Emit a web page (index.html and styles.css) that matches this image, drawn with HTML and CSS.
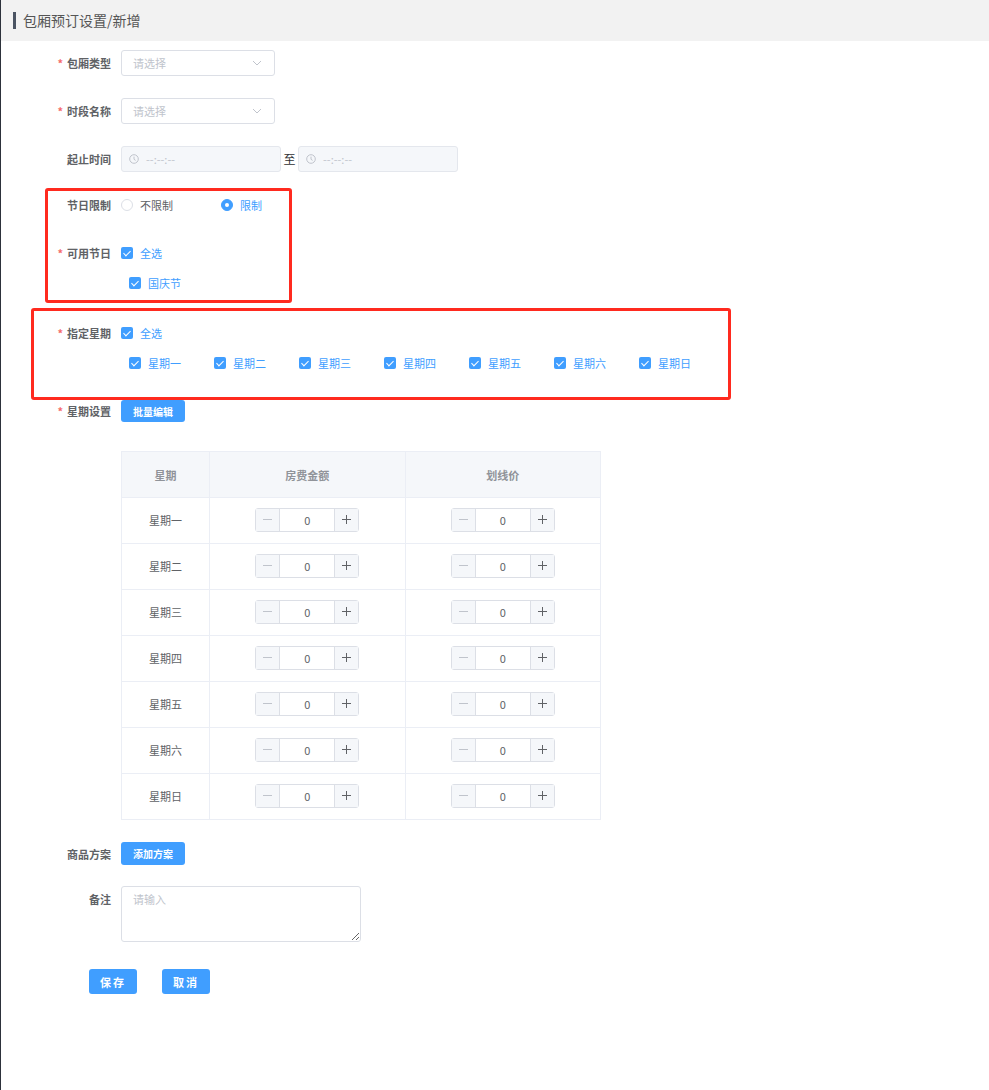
FILE: index.html
```html
<!DOCTYPE html>
<html lang="zh-CN">
<head>
    <meta charset="UTF-8">
    <meta name="viewport" content="width=device-width, initial-scale=1.0">
    <title>包厢预订设置/新增</title>
    <link rel="stylesheet" href="styles.css">
</head>
<body>
    <div class="page-header">
        <span class="page-title">包厢预订设置/新增</span>
    </div>

    <div class="form">
        <div class="form-item">
            <label class="form-label required">包厢类型</label>
            <div class="select">
                <span class="placeholder">请选择</span>
                <svg class="arrow" width="10" height="6" viewBox="0 0 10 6"><path d="M1 1l4 4 4-4" fill="none" stroke="#c0c4cc" stroke-width="1"/></svg>
            </div>
        </div>

        <div class="form-item">
            <label class="form-label required">时段名称</label>
            <div class="select">
                <span class="placeholder">请选择</span>
                <svg class="arrow" width="10" height="6" viewBox="0 0 10 6"><path d="M1 1l4 4 4-4" fill="none" stroke="#c0c4cc" stroke-width="1"/></svg>
            </div>
        </div>

        <div class="form-item form-item--time">
            <label class="form-label">起止时间</label>
            <div class="time-picker">
                <svg width="10" height="10" viewBox="0 0 10 10"><circle cx="5" cy="5" r="4.3" fill="none" stroke="#c0c4cc" stroke-width="1"/><path d="M5 2.6V5.3L6.6 6.4" fill="none" stroke="#c0c4cc" stroke-width="1"/></svg>
                <span class="placeholder">--:--:--</span>
            </div>
            <span class="range-sep">至</span>
            <div class="time-picker">
                <svg width="10" height="10" viewBox="0 0 10 10"><circle cx="5" cy="5" r="4.3" fill="none" stroke="#c0c4cc" stroke-width="1"/><path d="M5 2.6V5.3L6.6 6.4" fill="none" stroke="#c0c4cc" stroke-width="1"/></svg>
                <span class="placeholder">--:--:--</span>
            </div>
        </div>

        <div class="form-item">
            <label class="form-label">节日限制</label>
            <span class="radio"><span class="radio-inner"></span>不限制</span>
            <span class="radio is-checked"><span class="radio-inner"></span>限制</span>
        </div>

        <div class="form-item form-item--holiday">
            <label class="form-label required">可用节日</label>
            <div class="check-block">
                <span class="checkbox"><span class="checkbox-inner"></span>全选</span>
                <div class="check-group">
                    <span class="checkbox"><span class="checkbox-inner"></span>国庆节</span>
                </div>
            </div>
        </div>

        <div class="form-item">
            <label class="form-label required">指定星期</label>
            <div class="check-block">
                <span class="checkbox"><span class="checkbox-inner"></span>全选</span>
                <div class="check-group">
                    <span class="checkbox"><span class="checkbox-inner"></span>星期一</span>
                    <span class="checkbox"><span class="checkbox-inner"></span>星期二</span>
                    <span class="checkbox"><span class="checkbox-inner"></span>星期三</span>
                    <span class="checkbox"><span class="checkbox-inner"></span>星期四</span>
                    <span class="checkbox"><span class="checkbox-inner"></span>星期五</span>
                    <span class="checkbox"><span class="checkbox-inner"></span>星期六</span>
                    <span class="checkbox"><span class="checkbox-inner"></span>星期日</span>
                </div>
            </div>
        </div>

        <div class="form-item form-item--week">
            <label class="form-label required">星期设置</label>
            <button class="btn btn--mini">批量编辑</button>
        </div>

        <table class="price-table">
            <thead>
                <tr>
                    <th class="col-week">星期</th>
                    <th>房费金额</th>
                    <th>划线价</th>
                </tr>
            </thead>
            <tbody id="price-rows"></tbody>
        </table>

        <div class="form-item form-item--goods">
            <label class="form-label">商品方案</label>
            <button class="btn btn--mini btn--tall">添加方案</button>
        </div>

        <div class="form-item form-item--remark">
            <label class="form-label">备注</label>
            <textarea class="textarea" placeholder="请输入"></textarea>
        </div>

        <div class="form-actions">
            <button class="btn btn--action">保存</button>
            <button class="btn btn--action">取消</button>
        </div>
    </div>

    <!-- 标注框 -->
    <div class="mark mark--holiday"></div>
    <div class="mark mark--week"></div>

    <script>
        const days = ['星期一', '星期二', '星期三', '星期四', '星期五', '星期六', '星期日'];
        const tbody = document.getElementById('price-rows');

        const minus = '<svg width="9" height="9" viewBox="0 0 9 9"><path d="M0 4.5h9" stroke="currentColor" stroke-width="1"/></svg>';
        const plus = '<svg width="9" height="9" viewBox="0 0 9 9"><path d="M0 4.5h9M4.5 0v9" stroke="currentColor" stroke-width="1"/></svg>';

        const numberInput = () =>
            '<div class="input-number">' +
                '<span class="in-btn is-disabled">' + minus + '</span>' +
                '<span class="in-value">0</span>' +
                '<span class="in-btn">' + plus + '</span>' +
            '</div>';

        days.forEach(day => {
            const tr = document.createElement('tr');
            tr.innerHTML = '<td>' + day + '</td><td>' + numberInput() + '</td><td>' + numberInput() + '</td>';
            tbody.appendChild(tr);
        });
    </script>
</body>
</html>
```

FILE: styles.css
```css
* {
    box-sizing: border-box;
}

body {
    margin: 0;
    min-height: 1090px;
    border-left: 1px solid #2d323b;
    background: #fff;
    color: #606266;
    font-family: 'Noto Sans CJK SC', 'Noto Sans', sans-serif;
    font-size: 11px;
    position: relative;
}

.page-header {
    height: 41px;
    background: #f2f2f2;
    padding-left: 12px;
    display: flex;
    align-items: center;
}

.page-title {
    border-left: 3px solid #4b5463;
    padding-left: 7px;
    font-size: 14px;
    line-height: 17px;
    color: #555;
}

.form {
    padding-top: 9px;
}

.form-item {
    display: flex;
    align-items: flex-start;
    margin-bottom: 22px;
    line-height: 26px;
}

.form-label {
    width: 120px;
    flex-shrink: 0;
    padding-right: 10px;
    text-align: right;
    font-weight: bold;
    color: #606266;
}

.form-label.required::before {
    content: '*';
    color: #f56c6c;
    margin-right: 4px;
}

.placeholder {
    color: #c0c4cc;
}

.select {
    width: 154px;
    height: 26px;
    border: 1px solid #dcdfe6;
    border-radius: 3px;
    padding: 0 12px 0 11px;
    display: flex;
    align-items: center;
    justify-content: space-between;
    line-height: 24px;
}

.time-picker {
    width: 160px;
    height: 26px;
    background: #f5f7fa;
    border: 1px solid #e4e7ed;
    border-radius: 3px;
    padding-left: 7px;
    display: flex;
    align-items: center;
    gap: 7px;
    line-height: 24px;
}

.range-sep {
    width: 17px;
    text-align: center;
    color: #303133;
    font-size: 12px;
}

.form-item--time {
    margin-bottom: 20px;
}

.radio {
    display: inline-flex;
    align-items: center;
    margin-right: 48px;
    color: #606266;
}

.radio-inner {
    width: 12px;
    height: 12px;
    border: 1px solid #dcdfe6;
    border-radius: 50%;
    margin-right: 7px;
    position: relative;
}

.radio.is-checked {
    color: #409eff;
}

.radio.is-checked .radio-inner {
    background: #409eff;
    border-color: #409eff;
}

.radio.is-checked .radio-inner::after {
    content: '';
    position: absolute;
    left: 3px;
    top: 3px;
    width: 4px;
    height: 4px;
    border-radius: 50%;
    background: #fff;
}

.form-item--holiday {
    margin-bottom: 24px;
}

.check-block {
    display: flex;
    flex-direction: column;
    gap: 4px;
}

.check-group {
    display: flex;
    padding-left: 8px;
}

.checkbox {
    display: inline-flex;
    align-items: center;
    color: #409eff;
    margin-right: 33px;
}

.checkbox-inner {
    width: 12px;
    height: 12px;
    border-radius: 2px;
    background: #409eff;
    margin-right: 7px;
    position: relative;
}

.checkbox-inner::after {
    content: '';
    position: absolute;
    left: 4px;
    top: 1.5px;
    width: 3px;
    height: 6px;
    border: 1px solid #fff;
    border-left: 0;
    border-top: 0;
    transform: rotate(45deg);
}

.btn {
    border: none;
    border-radius: 3px;
    background: #409eff;
    color: #fff;
    font-family: inherit;
    cursor: pointer;
}

.btn--mini {
    width: 64px;
    height: 22px;
    margin-top: 2px;
    font-size: 10px;
    font-weight: bold;
}

.btn--tall {
    height: 23px;
    margin-top: 1px;
}

.form-item--week {
    margin-bottom: 27px;
}

.price-table {
    margin-left: 120px;
    width: 480px;
    border-collapse: collapse;
    margin-bottom: 21px;
}

.price-table th,
.price-table td {
    border: 1px solid #ebeef5;
    height: 46px;
    text-align: center;
    font-size: 11px;
    padding: 0;
}

.price-table th {
    background: #f5f7fa;
    color: #909399;
    font-weight: bold;
}

.price-table td {
    color: #606266;
    padding-bottom: 2px;
}

.price-table .col-week {
    width: 88px;
}

.input-number {
    display: inline-flex;
    width: 104px;
    height: 24px;
    border: 1px solid #dcdfe6;
    border-radius: 3px;
    vertical-align: middle;
    line-height: 22px;
}

.in-btn {
    width: 24px;
    background: #f5f7fa;
    color: #606266;
    display: flex;
    align-items: center;
    justify-content: center;
}

.in-btn:first-child {
    border-right: 1px solid #dcdfe6;
}

.in-btn:last-child {
    border-left: 1px solid #dcdfe6;
}

.in-btn.is-disabled {
    color: #c0c4cc;
}

.in-value {
    flex: 1;
    color: #606266;
    font-size: 11px;
}

.form-item--goods {
    margin-bottom: 19px;
}

.textarea {
    width: 240px;
    height: 56px;
    border: 1px solid #dcdfe6;
    border-radius: 3px;
    padding: 4px 11px;
    font-family: inherit;
    font-size: 11px;
    color: #606266;
    resize: vertical;
}

.textarea::placeholder {
    color: #c0c4cc;
}

.form-item--remark {
    margin-bottom: 27px;
}

.form-actions {
    display: flex;
    gap: 25px;
    padding-left: 88px;
}

.btn--action {
    width: 48px;
    height: 25px;
    font-size: 11px;
    font-weight: bold;
    letter-spacing: 2px;
}

.mark {
    position: absolute;
    border: 3px solid #ff2a1f;
    border-radius: 3px;
}

.mark--holiday {
    left: 44px;
    top: 188px;
    width: 247px;
    height: 115px;
}

.mark--week {
    left: 30px;
    top: 308px;
    width: 700px;
    height: 92px;
}
```
